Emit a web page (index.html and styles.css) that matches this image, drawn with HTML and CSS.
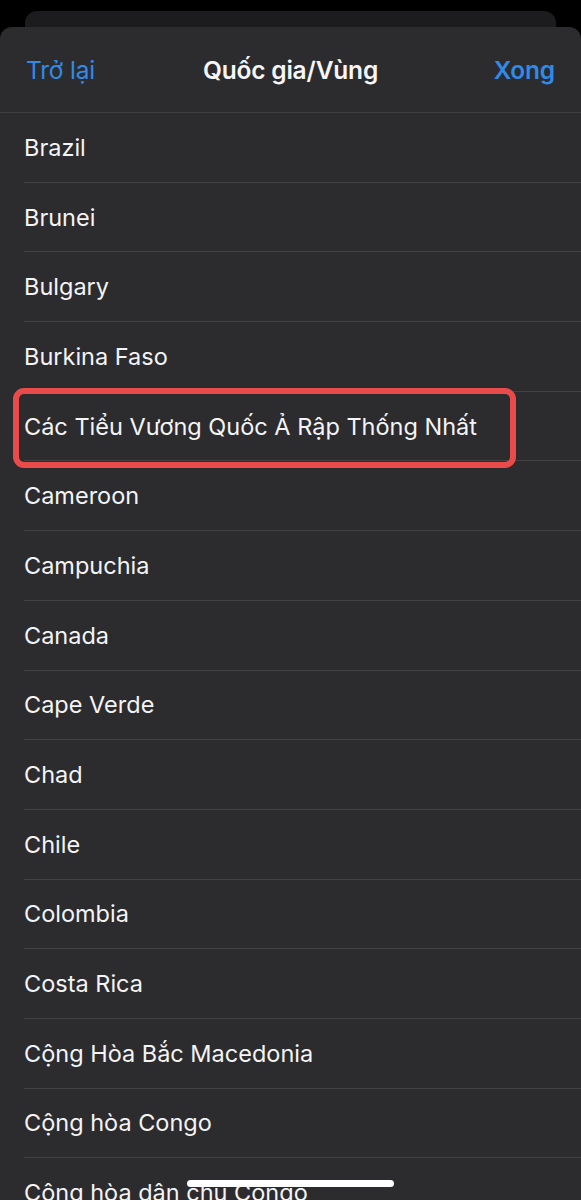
FILE: index.html
```html
<!DOCTYPE html>
<html lang="vi">
<head>
<meta charset="utf-8">
<title>Quốc gia/Vùng</title>
<link rel="stylesheet" href="styles.css">
</head>
<body>
<div class="screen">
  <div class="backcard"></div>
  <div class="sheet">
    <header class="nav">
      <span class="nav-back">Trở lại</span>
      <span class="nav-title">Quốc gia/Vùng</span>
      <span class="nav-done">Xong</span>
    </header>
    <ul class="list">
      <li class="row"><span class="row-inner">Brazil</span></li>
      <li class="row"><span class="row-inner">Brunei</span></li>
      <li class="row"><span class="row-inner">Bulgary</span></li>
      <li class="row"><span class="row-inner">Burkina Faso</span></li>
      <li class="row row-marked"><span class="row-inner">Các Tiểu Vương Quốc Ả Rập Thống Nhất</span><span class="mark"></span></li>
      <li class="row"><span class="row-inner">Cameroon</span></li>
      <li class="row"><span class="row-inner">Campuchia</span></li>
      <li class="row"><span class="row-inner">Canada</span></li>
      <li class="row"><span class="row-inner">Cape Verde</span></li>
      <li class="row"><span class="row-inner">Chad</span></li>
      <li class="row"><span class="row-inner">Chile</span></li>
      <li class="row"><span class="row-inner">Colombia</span></li>
      <li class="row"><span class="row-inner">Costa Rica</span></li>
      <li class="row"><span class="row-inner">Cộng Hòa Bắc Macedonia</span></li>
      <li class="row"><span class="row-inner">Cộng hòa Congo</span></li>
      <li class="row"><span class="row-inner">Cộng hòa dân chủ Congo</span></li>
    </ul>
  </div>
  <div class="home-indicator"></div>
</div>
</body>
</html>
```

FILE: styles.css
```css
* { box-sizing: border-box; }
html, body { margin: 0; padding: 0; background: #000; }
.screen {
  position: relative;
  width: 581px;
  height: 1200px;
  overflow: hidden;
  background: #000;
  font-family: Inter, "Noto Sans", "Liberation Sans", sans-serif;
  color: #f4f4f6;
}
.backcard {
  margin: 11px 25px 0;
  height: 16px;
  background: #1c1c1e;
  border-radius: 12px 12px 0 0;
}
.sheet {
  background: #2c2c2e;
  border-radius: 12px 12px 0 0;
  height: 1200px;
}
.nav {
  height: 86px;
  display: grid;
  grid-template-columns: 1fr auto 1fr;
  align-items: center;
  padding: 0 26px 0 26px;
  border-bottom: 1px solid #3e3e41;
  font-size: 24.5px;
  letter-spacing: -0.2px;
}
.nav-back { color: #2f8ae8; justify-self: start; }
.nav-title { font-weight: 600; color: #f6f6f8; }
.nav-done { color: #2f8ae8; font-weight: 600; justify-self: end; }
.list { list-style: none; margin: 0; padding: 0; }
.row {
  position: relative;
  height: 69.7px;
  padding-left: 24px;
}
.row-inner {
  display: flex;
  align-items: center;
  height: 100%;
  border-bottom: 1px solid #424245;
  font-size: 23.5px;
  letter-spacing: 0;
}
.mark {
  position: absolute;
  left: 13px;
  top: -4px;
  width: 503px;
  height: 80px;
  border: 6px solid #e94a4a;
  border-radius: 11px;
}
.home-indicator {
  position: absolute;
  left: 187px;
  top: 1180px;
  width: 207px;
  height: 7px;
  border-radius: 4px;
  background: #fff;
}
```
